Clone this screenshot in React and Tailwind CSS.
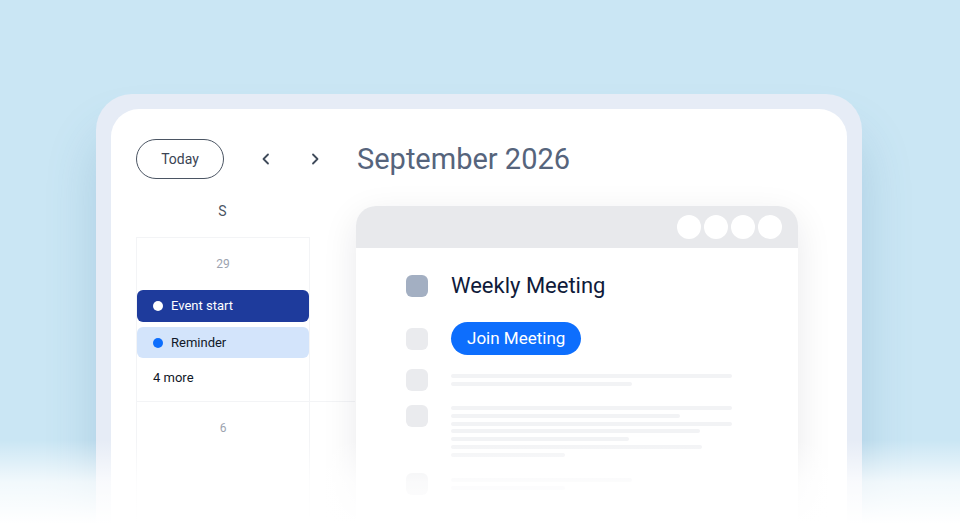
function Chevron({ dir }) {
  return (
    <svg width="14" height="14" viewBox="0 0 14 14" fill="none">
      <path
        d={dir === "left" ? "M9 2.5 4.5 7 9 11.5" : "M5 2.5 9.5 7 5 11.5"}
        stroke="#3f4a5a"
        strokeWidth="1.8"
        strokeLinecap="round"
        strokeLinejoin="round"
      />
    </svg>
  );
}

function SkeletonRow({ widths, className = "" }) {
  return (
    <div className={`flex items-start ${className}`}>
      <div className="w-[22px] h-[22px] rounded-md bg-[#eaebee]" />
      <div className="ml-[23px] flex flex-col gap-[4px] pt-[5px]">
        {widths.map((w, i) => (
          <div key={i} className="h-[4px] rounded-full bg-[#f2f3f5]" style={{ width: w }} />
        ))}
      </div>
    </div>
  );
}

function MeetingPopover() {
  return (
    <div className="absolute left-[245px] top-[97px] w-[442px] h-[340px] rounded-t-[20px] bg-white overflow-hidden shadow-[0_10px_36px_rgba(15,23,42,0.09)]">
      <div className="h-[42px] bg-[#e8e9ec] flex items-center justify-end gap-[3px] pr-[16px]">
        {[0, 1, 2, 3].map((i) => (
          <div key={i} className="w-[24px] h-[24px] rounded-full bg-white" />
        ))}
      </div>
      <div className="pl-[50px] pt-[27px]">
        <div className="flex items-center h-[22px]">
          <div className="w-[22px] h-[22px] rounded-md bg-[#a3afc2]" />
          <span className="ml-[23px] text-[22px] text-[#0f1a3a] leading-none">Weekly Meeting</span>
        </div>
        <div className="flex items-center h-[33px] mt-[25px]">
          <div className="w-[22px] h-[22px] rounded-md bg-[#eaebee]" />
          <button className="ml-[23px] h-[33px] px-[16px] rounded-full bg-[#0d6efd] text-white text-[17px]">
            Join Meeting
          </button>
        </div>
        <SkeletonRow className="mt-[14px]" widths={[281, 181]} />
        <div className="flex items-start mt-[14px]">
          <div className="w-[22px] h-[22px] rounded-md bg-[#eaebee]" />
          <div className="ml-[23px] flex flex-col gap-[3.8px] pt-[1px]">
            {[281, 229, 281, 249, 178, 251, 114].map((w, i) => (
              <div key={i} className="h-[4px] rounded-full bg-[#f2f3f5]" style={{ width: w }} />
            ))}
          </div>
        </div>
        <SkeletonRow className="mt-[16px]" widths={[181, 114]} />
      </div>
    </div>
  );
}

export default function App() {
  return (
    <div
      className="relative w-[960px] h-[524px] overflow-hidden bg-[#cae6f4]"
      style={{ fontFamily: "Roboto, 'Noto Sans', sans-serif" }}
    >
      <div className="ml-[96px] mt-[94px] w-[766px] h-[460px] p-[15px] pb-0 rounded-t-[36px] bg-[#e6ecf6] shadow-[0_40px_50px_rgba(60,120,165,0.22)]">
        <div className="relative h-full rounded-t-[28px] bg-white overflow-hidden">
          <div className="flex items-center pl-[25px] pt-[30px]">
            <button className="w-[88px] h-10 rounded-full border border-[#4b5563] text-[14px] text-[#3b4453]">
              Today
            </button>
            <div className="ml-[26px] w-8 h-8 flex items-center justify-center">
              <Chevron dir="left" />
            </div>
            <div className="ml-[17px] w-8 h-8 flex items-center justify-center">
              <Chevron dir="right" />
            </div>
            <h1 className="ml-[26px] text-[29px] text-[#56647c] leading-none">September 2026</h1>
          </div>

          <div className="ml-[25px] mt-[22px] w-[173px] h-[20px] flex items-center justify-center text-[14px] text-[#4b5563]">
            S
          </div>

          <div className="ml-[25px] mt-[16px] grid grid-cols-[173px_46px]">
            <div className="h-[164px] border-t border-l border-[#f3f4f6]">
              <div className="pt-[18px] text-center text-[12px] leading-4 text-[#9ca3af]">29</div>
              <div className="mt-[18px] h-[32px] rounded-md bg-[#1e3b9c] flex items-center pl-[16px] text-[13px] text-white">
                <span className="w-[10px] h-[10px] rounded-full bg-white" />
                <span className="ml-[8px]">Event start</span>
              </div>
              <div className="mt-[5px] h-[31px] rounded-md bg-[#d3e4fb] flex items-center pl-[16px] text-[13px] text-[#111827]">
                <span className="w-[10px] h-[10px] rounded-full bg-[#0d6efd]" />
                <span className="ml-[8px]">Reminder</span>
              </div>
              <div className="mt-[11px] pl-[16px] text-[13px] leading-[18px] text-[#111827]">4 more</div>
            </div>
            <div className="h-[164px] border-l border-[#f3f4f6]" />
            <div className="h-[164px] border-t border-l border-[#f3f4f6]">
              <div className="pt-[18px] text-center text-[12px] leading-4 text-[#9ca3af]">6</div>
            </div>
            <div className="h-[164px] border-t border-l border-[#f3f4f6]" />
          </div>

          <MeetingPopover />
        </div>
      </div>

      <div className="absolute inset-x-0 bottom-0 h-[84px] bg-gradient-to-b from-white/0 via-white/75 to-white" />
    </div>
  );
}
